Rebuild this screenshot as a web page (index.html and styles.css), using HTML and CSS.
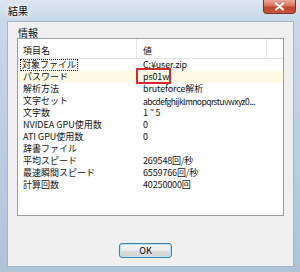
FILE: index.html
```html
<!DOCTYPE html>
<html lang="ja">
<head>
<meta charset="utf-8">
<link rel="stylesheet" href="styles.css">
</head>
<body>
<div class="window">
  <div class="titlebar">
    <span class="title">結果</span>
    <div class="close">
      <svg width="11" height="9" viewBox="0 0 11 9"><path d="M2 1.5 L9 7.5 M9 1.5 L2 7.5" stroke="#fff" stroke-width="2.2" stroke-linecap="round"/></svg>
    </div>
  </div>
  <div class="client">
    <div class="group-label">情報</div>
    <div class="listview">
      <div class="header">
        <div class="hcell">項目名</div>
        <div class="hcell">値</div>
        <div class="hcell"></div>
      </div>
      <div class="row"><div class="cell"><span class="focus">対象ファイル</span></div><div class="cell val">C:¥user.zip</div></div>
      <div class="row sel"><div class="cell">パスワード</div><div class="cell val">ps01w<span class="mark"></span></div></div>
      <div class="row"><div class="cell">解析方法</div><div class="cell val">bruteforce解析</div></div>
      <div class="row"><div class="cell">文字セット</div><div class="cell val charset">abcdefghijklmnopqrstuvwxyz0...</div></div>
      <div class="row"><div class="cell">文字数</div><div class="cell val">1 ˜ 5</div></div>
      <div class="row"><div class="cell">NVIDEA GPU使用数</div><div class="cell val">0</div></div>
      <div class="row"><div class="cell">ATI GPU使用数</div><div class="cell val">0</div></div>
      <div class="row"><div class="cell">辞書ファイル</div><div class="cell val"></div></div>
      <div class="row"><div class="cell">平均スピード</div><div class="cell val">269548回/秒</div></div>
      <div class="row"><div class="cell">最速瞬間スピード</div><div class="cell val">6559766回/秒</div></div>
      <div class="row"><div class="cell">計算回数</div><div class="cell val">40250000回</div></div>
    </div>
    <div class="buttons"><button class="ok">OK</button></div>
  </div>
</div>
</body>
</html>
```
FILE: styles.css
```css
html, body {
  margin: 0;
  padding: 0;
}
body {
  width: 300px;
  height: 272px;
  overflow: hidden;
  font-family: "Noto Sans CJK JP", "Noto Sans", sans-serif;
  color: #111;
}
.window {
  box-sizing: border-box;
  width: 300px;
  height: 272px;
  display: flex;
  flex-direction: column;
  padding: 0 6px 5px 7px;
  background: linear-gradient(180deg, #dce7f1 0px, #c8d8e8 20px, #b9cde0 60%, #aec3d8 100%);
}
.titlebar {
  height: 21px;
  display: flex;
  align-items: flex-start;
}
.title {
  margin: 5px 0 0 1px;
  font-size: 10px;
  line-height: 12px;
  color: #000;
  text-shadow: 0 0 4px #fff, 0 0 6px #fff;
}
.close {
  margin-left: auto;
  margin-right: -2px;
  width: 33px;
  height: 14px;
  box-sizing: border-box;
  border: 1px solid #7a3328;
  border-top: none;
  border-radius: 0 0 4px 4px;
  background: linear-gradient(180deg, #e9a89a 0%, #d7725f 45%, #c2432b 55%, #c9573c 100%);
  display: flex;
  align-items: center;
  justify-content: center;
}
.client {
  flex: 1;
  display: flex;
  flex-direction: column;
  background: #f0f0f0;
  border: 1px solid #a3b6c9;
  padding: 5px 9px 0 9px;
}
.group-label {
  font-size: 10px;
  line-height: 11px;
  height: 11px;
  padding-left: 1px;
  color: #111;
}
.listview {
  height: 178px;
  flex-shrink: 0;
  box-sizing: border-box;
  border: 1px solid #9a9fa6;
  background: #fff;
  display: flex;
  flex-direction: column;
}
.header {
  display: grid;
  grid-template-columns: 119px 130px 1fr;
  height: 20px;
  box-sizing: border-box;
  border-bottom: 1px solid #e3e6ea;
}
.hcell {
  font-size: 9px;
  line-height: 12px;
  padding: 6px 0 0 5px;
  border-right: 1px solid #e3e6ea;
}
.hcell:nth-child(2) {
  padding-left: 6px;
}
.hcell:last-child {
  border-right: none;
}
.row {
  display: grid;
  grid-template-columns: 119px 130px;
  height: 12px;
}
.row.sel {
  background: #fdfbe3;
}
.cell {
  font-size: 9px;
  line-height: 12px;
  padding-left: 5px;
  white-space: nowrap;
}
.cell.val {
  padding-left: 6px;
  position: relative;
  letter-spacing: -0.15px;
}
.cell.charset {
  font-size: 8.5px;
  letter-spacing: -0.55px;
}
.focus {
  display: inline-block;
  border: 1px dotted #222;
  line-height: 10px;
  padding: 0 1px;
  margin-left: -3px;
}
.mark {
  position: absolute;
  left: -1px;
  top: -3px;
  width: 31px;
  height: 12px;
  border: 2px solid #d42a2a;
}
.buttons {
  display: flex;
  padding-left: 102px;
  margin-top: 27px;
}
.ok {
  width: 53px;
  height: 15px;
  padding: 0;
  box-sizing: border-box;
  border: 1px solid #3c7fb1;
  border-radius: 3px;
  background: linear-gradient(180deg, #f4f4f4 0%, #ececec 50%, #dedede 52%, #d2d2d2 100%);
  box-shadow: inset 0 0 0 1px #bde4f7;
  font-family: "Noto Sans CJK JP", "Noto Sans", sans-serif;
  font-size: 9px;
  line-height: 12px;
  color: #000;
}
```
